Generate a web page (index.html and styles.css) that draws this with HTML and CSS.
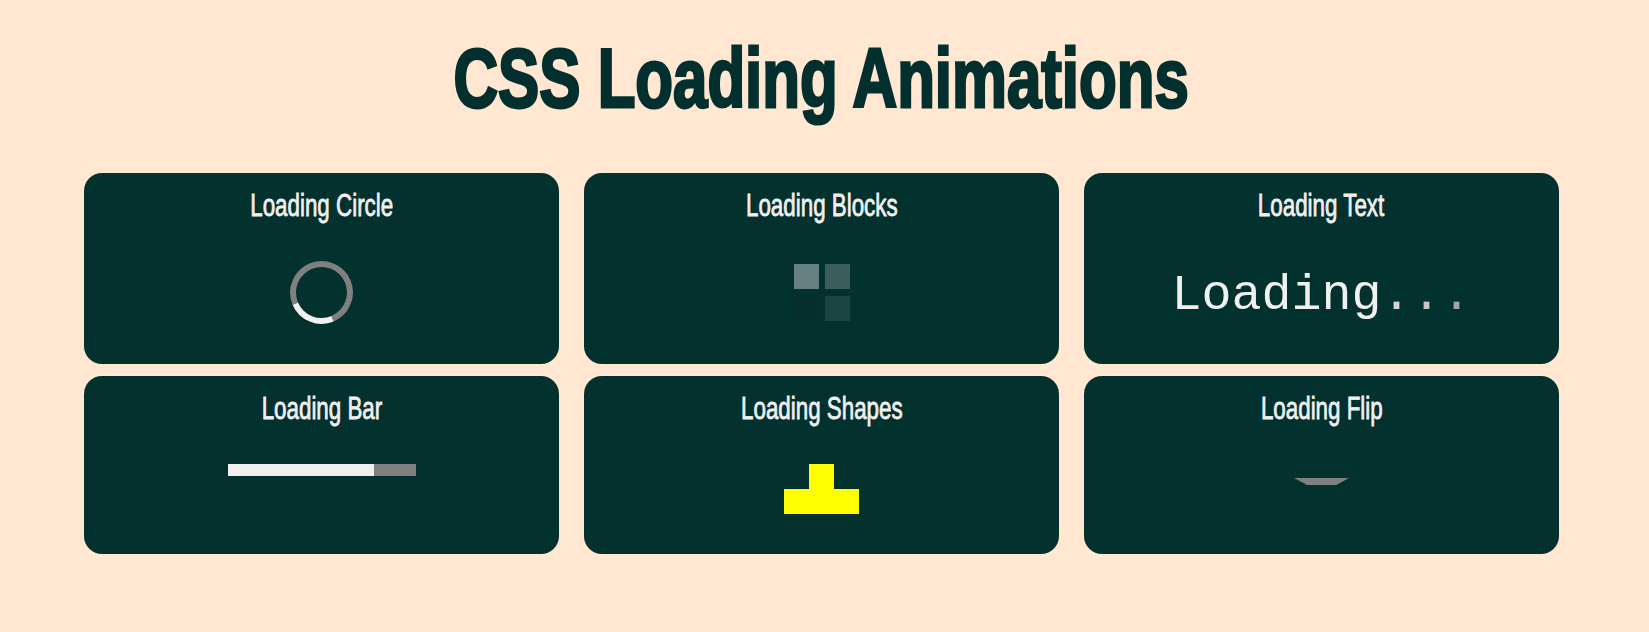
FILE: index.html
```html
<!DOCTYPE html>
<html lang="en">
<head>
<meta charset="utf-8">
<title>CSS Loading Animations</title>
<link rel="stylesheet" href="styles.css">
</head>
<body>
<main class="page">
  <h1 class="page-title"><span class="squeeze">CSS Loading Animations</span></h1>
  <section class="grid">
    <article class="card">
      <h2 class="card-title"><span class="squeeze">Loading Circle</span></h2>
      <div class="anim">
        <div class="circle"></div>
      </div>
    </article>
    <article class="card">
      <h2 class="card-title"><span class="squeeze">Loading Blocks</span></h2>
      <div class="anim">
        <div class="blocks">
          <div class="block b1"></div>
          <div class="block b2"></div>
          <div class="block b3"></div>
          <div class="block b4"></div>
        </div>
      </div>
    </article>
    <article class="card">
      <h2 class="card-title"><span class="squeeze">Loading Text</span></h2>
      <div class="anim">
        <div class="loading-text">Loading<span class="dot d1">.</span><span class="dot d2">.</span><span class="dot d3">.</span></div>
      </div>
    </article>
    <article class="card">
      <h2 class="card-title"><span class="squeeze">Loading Bar</span></h2>
      <div class="anim">
        <div class="bar"><div class="bar-fill"></div></div>
      </div>
    </article>
    <article class="card">
      <h2 class="card-title"><span class="squeeze">Loading Shapes</span></h2>
      <div class="anim">
        <div class="shapes">
          <div class="shape-row"><div class="sq"></div></div>
          <div class="shape-row"><div class="sq"></div><div class="sq"></div><div class="sq"></div></div>
        </div>
      </div>
    </article>
    <article class="card">
      <h2 class="card-title"><span class="squeeze">Loading Flip</span></h2>
      <div class="anim">
        <div class="flip"></div>
      </div>
    </article>
  </section>
</main>
</body>
</html>
```
FILE: styles.css
```css
* {
  box-sizing: border-box;
}

html, body {
  margin: 0;
  padding: 0;
}

body {
  background: #ffe7d1;
  font-family: "Liberation Sans", Arial, sans-serif;
  color: #03302e;
}

.page {
  width: 1475px;
  margin-left: 84px;
  padding-top: 34px;
}

.squeeze {
  display: inline-block;
  transform: scaleX(0.71);
}

.page-title {
  margin: 0 0 51px;
  text-align: center;
  font-size: 84px;
  line-height: 88px;
  font-weight: 700;
  color: #03302e;
  -webkit-text-stroke: 3px #03302e;
}

.page-title .squeeze {
  transform: scaleX(0.735);
}

.grid {
  display: grid;
  grid-template-columns: repeat(3, 475px);
  column-gap: 25px;
  row-gap: 12px;
}

.card {
  background: #03312e;
  border-radius: 18px;
  padding: 14px 0 40px;
  display: flex;
  flex-direction: column;
  align-items: center;
}

.card-title {
  margin: 0;
  font-size: 31.5px;
  line-height: 36px;
  font-weight: 400;
  color: #f0f0f0;
  text-align: center;
  -webkit-text-stroke: 0.8px #f0f0f0;
}

.anim {
  margin-top: 38px;
  display: flex;
  flex-direction: column;
  align-items: center;
}

/* circle */
.circle {
  width: 63px;
  height: 63px;
  border-radius: 50%;
  border: 6px solid #808080;
  border-bottom-color: #f0f0f0;
  transform: rotate(22deg);
}

/* blocks */
.blocks {
  margin-top: 3px;
  display: grid;
  grid-template-columns: 25px 25px;
  grid-template-rows: 25px 25px;
  column-gap: 6px;
  row-gap: 7px;
}

.b1 { background: #668180; }
.b2 { background: #3b5e5b; }
.b3 { background: #062f2c; }
.b4 { background: #1c4440; }

/* text */
.loading-text {
  margin-top: 8px;
  font-family: "Liberation Mono", "DejaVu Sans Mono", monospace;
  font-size: 50px;
  line-height: 54px;
  color: #f0f0f0;
  white-space: nowrap;
}

.d1 { color: #d6d6d6; }
.d2 { color: #c8c8c8; }
.d3 { color: #a6a6a6; }

/* bar */
.bar {
  width: 188px;
  height: 12px;
  background: #808080;
}

.bar-fill {
  width: 146px;
  height: 100%;
  background: #f0f0f0;
}

/* shapes */
.shapes {
  display: flex;
  flex-direction: column;
  align-items: center;
}

.shape-row {
  display: flex;
}

.sq {
  width: 25px;
  height: 25px;
  background: #ffff00;
}

/* flip */
.flip {
  margin-top: 14px;
  width: 55px;
  height: 7px;
  background: #808080;
  clip-path: polygon(0 0, 100% 0, 77% 100%, 24% 100%);
}
```
